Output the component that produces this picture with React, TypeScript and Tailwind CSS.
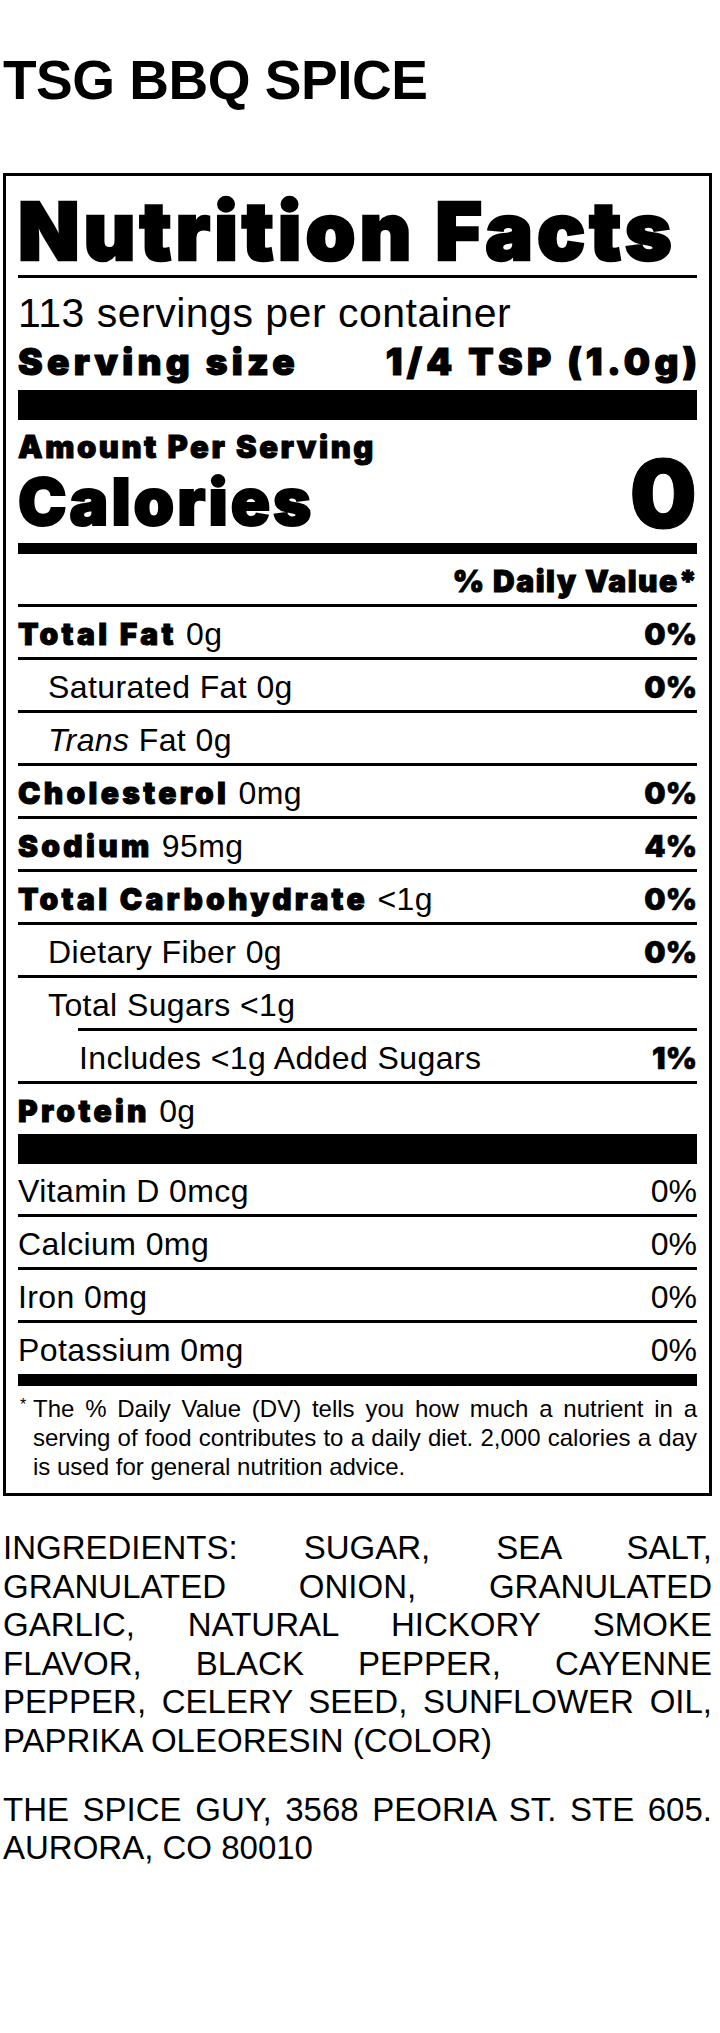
import React from "react";

type RowProps = {
  bold?: string;
  rest?: React.ReactNode;
  pct?: string;
  pctBold?: boolean;
  indent?: string;
};

function Line({ indent = "" }: { indent?: string }) {
  return <div className={`h-[3px] bg-black ${indent}`} />;
}

function Row({ bold, rest, pct, pctBold = true, indent = "" }: RowProps) {
  return (
    <div className={`flex justify-between h-[50px] pt-[3px] leading-[48px] text-[32px] tracking-[0.4px] ${indent}`}>
      <div className="whitespace-nowrap">
        {bold ? (
          <span className="font-['Inter',sans-serif] font-black text-[30px] tracking-[3.3px] [-webkit-text-stroke:1px_black]">
            {bold}
          </span>
        ) : null}
        {bold && rest ? " " : null}
        {rest}
      </div>
      {pct ? (
        pctBold ? (
          <div className="font-['Inter',sans-serif] font-black text-[30px] tracking-normal [-webkit-text-stroke:0.6px_black]">
            {pct}
          </div>
        ) : (
          <div className="tracking-normal">{pct}</div>
        )
      ) : null}
    </div>
  );
}

export default function App() {
  return (
    <div className="min-h-[2033px] bg-white text-black font-['Liberation_Sans',Arial,sans-serif] pl-[3px]">
      <div className="pt-[53px] text-[55px] leading-none font-bold tracking-[-0.5px]">TSG BBQ SPICE</div>

      <div className="mt-[65px] w-[709px] border-[3px] border-black px-[12px] pt-[15px] pb-[12px]">
        <div className="font-['Inter',sans-serif] font-black text-[80px] leading-none whitespace-nowrap tracking-[4px] [-webkit-text-stroke:2.5px_black]">
          Nutrition Facts
        </div>
        <div className="mt-[4px]">
          <Line />
        </div>
        <div className="mt-[15px] text-[41px] leading-none tracking-[0.5px]">113 servings per container</div>
        <div className="mt-[9px] flex justify-between font-['Inter',sans-serif] font-black text-[37px] leading-none tracking-[4.3px] [-webkit-text-stroke:1.2px_black]">
          <span>Serving size</span>
          <span className="-mr-[4.3px]">1/4 TSP (1.0g)</span>
        </div>
        <div className="mt-[10px] h-[30px] bg-black" />

        <div className="mt-[11px] font-['Inter',sans-serif] font-black text-[31px] leading-none tracking-[2.5px] [-webkit-text-stroke:1px_black]">
          Amount Per Serving
        </div>
        <div className="flex justify-between items-start font-['Inter',sans-serif] font-black">
          <span className="mt-[7px] text-[65px] leading-none tracking-[3px] [-webkit-text-stroke:2px_black]">Calories</span>
          <span className="-mt-[16px] text-[95px] leading-none [-webkit-text-stroke:1px_black]">0</span>
        </div>
        <div className="mt-[2px] h-[11px] bg-black" />

        <div className="mt-[12px] text-right font-['Inter',sans-serif] font-black text-[30px] leading-none tracking-[1.5px] [-webkit-text-stroke:1px_black]">
          <span className="-mr-[1.5px]">% Daily Value*</span>
        </div>
        <div className="mt-[8px]">
          <Line />
        </div>
        <Row bold="Total Fat" rest="0g" pct="0%" />
        <Line />
        <Row rest="Saturated Fat 0g" pct="0%" indent="pl-[30px]" />
        <Line />
        <Row
          rest={
            <>
              <i>Trans</i> Fat 0g
            </>
          }
          indent="pl-[30px]"
        />
        <Line />
        <Row bold="Cholesterol" rest="0mg" pct="0%" />
        <Line />
        <Row bold="Sodium" rest="95mg" pct="4%" />
        <Line />
        <Row bold="Total Carbohydrate" rest="<1g" pct="0%" />
        <Line />
        <Row rest="Dietary Fiber 0g" pct="0%" indent="pl-[30px]" />
        <Line />
        <Row rest="Total Sugars <1g" indent="pl-[30px]" />
        <Line indent="ml-[60px]" />
        <Row rest="Includes <1g Added Sugars" pct="1%" indent="pl-[61px]" />
        <Line />
        <Row bold="Protein" rest="0g" />
        <div className="h-[30px] bg-black" />

        <Row rest="Vitamin D 0mcg" pct="0%" pctBold={false} />
        <Line />
        <Row rest="Calcium 0mg" pct="0%" pctBold={false} />
        <Line />
        <Row rest="Iron 0mg" pct="0%" pctBold={false} />
        <Line />
        <Row rest="Potassium 0mg" pct="0%" pctBold={false} />
        <div className="mt-[1px] h-[12px] bg-black" />

        <div className="mt-[8px] flex text-[24px] leading-[29px]">
          <span className="w-[15px] pl-[2px] text-[16px] leading-[22px]">*</span>
          <div className="flex-1">
            <div className="[text-align-last:justify] whitespace-nowrap">
              The % Daily Value (DV) tells you how much a nutrient in a
            </div>
            <div className="[text-align-last:justify] whitespace-nowrap">
              serving of food contributes to a daily diet. 2,000 calories a day
            </div>
            <div className="whitespace-nowrap">is used for general nutrition advice.</div>
          </div>
        </div>
      </div>

      <div className="mt-[33px] w-[709px] text-[33px] leading-[38.6px]">
        <div className="[text-align-last:justify]">INGREDIENTS: SUGAR, SEA SALT,</div>
        <div className="[text-align-last:justify]">GRANULATED ONION, GRANULATED</div>
        <div className="[text-align-last:justify]">GARLIC, NATURAL HICKORY SMOKE</div>
        <div className="[text-align-last:justify]">FLAVOR, BLACK PEPPER, CAYENNE</div>
        <div className="[text-align-last:justify]">PEPPER, CELERY SEED, SUNFLOWER OIL,</div>
        <div>PAPRIKA OLEORESIN (COLOR)</div>
        <div className="mt-[30px] [text-align-last:justify]">THE SPICE GUY, 3568 PEORIA ST. STE 605.</div>
        <div>AURORA, CO 80010</div>
      </div>
    </div>
  );
}
